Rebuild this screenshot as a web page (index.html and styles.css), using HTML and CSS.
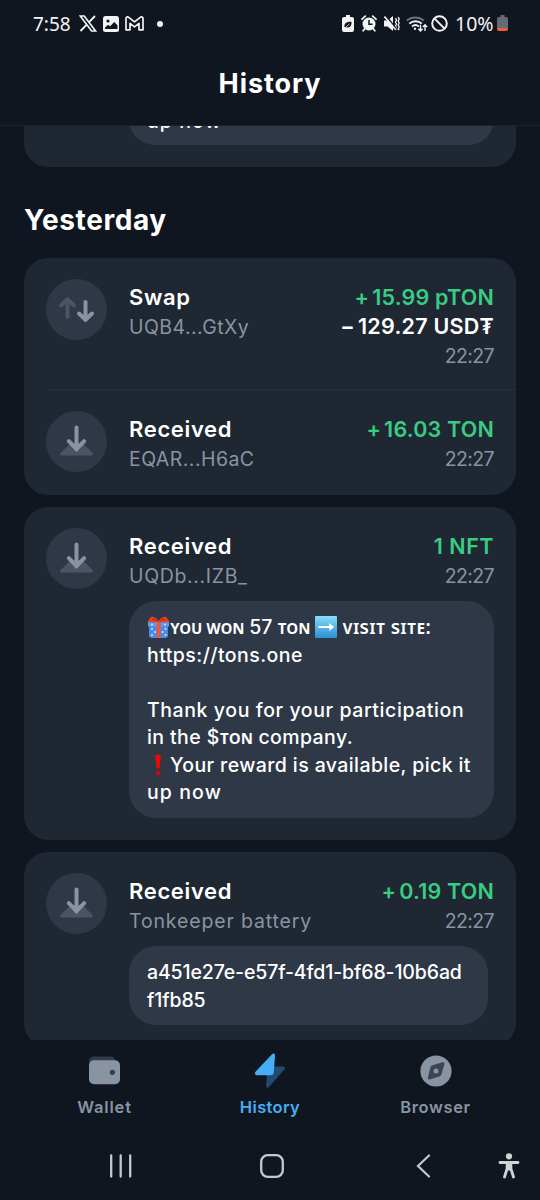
FILE: index.html
```html
<!DOCTYPE html>
<html lang="en">
<head>
<meta charset="utf-8">
<title>History</title>
<link rel="stylesheet" href="styles.css">
</head>
<body>
<svg class="defs" width="0" height="0" aria-hidden="true">
  <symbol id="receive" viewBox="0 0 61 61">
    <path d="M15.500 44.500h30c1.600 0 2-1.300 1-2.400l-10-10H25l-10.500 10c-1 1.100-.6 2.400 1 2.400z" fill="#4a5463"/>
    <path d="M30.500 16.500v22M22.800 30.200l7.700 7.800 7.700-7.800" fill="none" stroke="#8994a3" stroke-width="4" stroke-linecap="round" stroke-linejoin="round"/>
  </symbol>
</svg>
<div class="phone">
  <header class="top">
    <div class="status">
      <div class="status-left">
        <span class="clock">7:58</span>
        <svg class="s-x" width="18" height="17" viewBox="0 0 18 17"><path d="M1.200 1h4l11.400 15h-4z" fill="none" stroke="#f1f3f5" stroke-width="1.700"/><path d="M16 1l-6.400 6.600M7.700 9.600L1.500 16" stroke="#f1f3f5" stroke-width="1.900"/></svg>
        <svg class="s-img" width="16" height="16" viewBox="0 0 16 16"><rect width="16" height="16" rx="2.500" fill="#f1f3f5"/><circle cx="5" cy="5" r="1.600" fill="#10161f"/><path d="M2 11.500l3-2.800 2.200 1.500 4-4.200 3.300 3.200v3.800H2z" fill="#10161f"/></svg>
        <svg class="s-gm" width="19" height="15" viewBox="0 0 19 15"><path d="M1 13.800V2.500C1 .8 2.600.4 3.700 1.300l5.800 4.500 5.800-4.500c1.100-.9 2.700-.5 2.700 1.200v11.300h-4V7.300l-4.500 3.500L5 7.300v6.500z" fill="none" stroke="#f1f3f5" stroke-width="1.700" stroke-linejoin="round"/></svg>
        <i class="dot"></i>
      </div>
      <div class="status-right">
        <svg width="12" height="17" viewBox="0 0 12 17"><path d="M4 0h4v2h2a2 2 0 0 1 2 2v11a2 2 0 0 1-2 2H2a2 2 0 0 1-2-2V4a2 2 0 0 1 2-2h2z" fill="#f1f3f5"/><path d="M2.500 12c-.4-3.500 1.500-5.200 7-5.200.2 4-1.500 6.500-5 5.500M2.200 13.500l3.500-3.700" fill="#10161f"/><path d="M4 12l3.500-3" stroke="#f1f3f5" stroke-width=".8"/></svg>
        <svg width="16" height="17" viewBox="0 0 16 17"><circle cx="8" cy="9" r="6.500" fill="#f1f3f5"/><path d="M1 4.200L4.300 1.200M15 4.200l-3.300-3M3.500 14l-1.300 1.700M12.500 14l1.300 1.700" stroke="#f1f3f5" stroke-width="1.800" stroke-linecap="round"/><path d="M8 5v4.200h3.500" fill="none" stroke="#10161f" stroke-width="1.500"/></svg>
        <svg width="16" height="17" viewBox="0 0 16 17"><path d="M0 5.500h3.500L9 1v15l-5.500-4.500H0z" fill="#f1f3f5"/><path d="M11.500 3l1 2-1 2 1 2-1 2 1 2-1 2M14.200 2l1 2-1 2 1 2-1 2 1 2-1 2 1 1" fill="none" stroke="#f1f3f5" stroke-width="1.300"/><path d="M1.500 0l11 14" stroke="#10161f" stroke-width="1.500"/><path d="M.5 1.500l11 13" stroke="#f1f3f5" stroke-width="1.600"/></svg>
        <svg width="22" height="17" viewBox="0 0 22 17"><path d="M.8 5.600a13 13 0 0 1 17 0" fill="none" stroke="#6b7078" stroke-width="2"/><path d="M3.300 8.600a9.300 9.300 0 0 1 12.500 0M6 11.500a5.300 5.300 0 0 1 6.800 0" fill="none" stroke="#f1f3f5" stroke-width="1.900"/><circle cx="9" cy="13.700" r="1.200" fill="#f1f3f5"/><path d="M14.500 9.800v6M12.400 13.700l2.100 2.300 2.100-2.300M19 16v-6M16.900 12l2.100-2.300 2.100 2.300" fill="none" stroke="#f1f3f5" stroke-width="1.400"/></svg>
        <svg width="17" height="17" viewBox="0 0 17 17"><g fill="none" stroke="#f1f3f5" stroke-width="2"><circle cx="8.500" cy="8.500" r="7.300"/><path d="M3.400 3.400l10.200 10.200"/></g></svg>
        <span class="percent">10%</span>
        <svg class="s-bat" width="11" height="17" viewBox="0 0 11 17"><path d="M3.500 0h4v2H9a2 2 0 0 1 2 2v9H0V4a2 2 0 0 1 2-2h1.500z" fill="#666b73"/><path d="M0 13h11v1a2 2 0 0 1-2 2H2a2 2 0 0 1-2-2z" fill="#e2603d"/></svg>
      </div>
    </div>
    <h1 class="title">History</h1>
  </header>

  <main class="feed">
    <section class="card peek">
      <div class="message"><p class="l-6">up now</p></div>
    </section>
    <h2 class="day">Yesterday</h2>

    <section class="card">
      <article class="row row-tall">
        <svg class="badge" viewBox="0 0 61 61"><g fill="none" stroke-width="4" stroke-linecap="round" stroke-linejoin="round"><path d="M21.500 38V21M15 26.500l6.500-6.300 6.500 6.300" stroke="#4a5463"/><path d="M39.500 23v18M33 34.500l6.500 6.300 6.500-6.300" stroke="#8994a3"/></g></svg>
        <div class="who"><b class="kind k-swap">Swap</b><span class="addr a-1">UQB4...GtXy</span></div>
        <div class="sum"><b class="plus p-1">+<i></i>15.99 pTON</b><b class="minus">−<i></i>129.27 USD₮</b><span class="time">22:27</span></div>
      </article>
      <article class="row row-next">
        <svg class="badge"><use href="#receive"/></svg>
        <div class="who"><b class="kind">Received</b><span class="addr a-2">EQAR...H6aC</span></div>
        <div class="sum"><b class="plus p-2">+<i></i>16.03 TON</b><span class="time">22:27</span></div>
      </article>
    </section>

    <section class="card">
      <article class="row">
        <svg class="badge"><use href="#receive"/></svg>
        <div class="who"><b class="kind">Received</b><span class="addr a-3">UQDb...IZB_</span></div>
        <div class="sum"><b class="plus p-3">1 NFT</b><span class="time">22:27</span></div>
      </article>
      <div class="message note">
        <p class="l-1"><svg class="emoji gift" width="23" height="22" viewBox="0 0 23 22"><path d="M2 8h19v12.500L19 22H4l-2-1.500z" fill="#4a8be8"/><path d="M1 6h21v4.500H1z" fill="#5d9af0"/><g fill="#cfe6ff"><circle cx="5" cy="8.500" r="1"/><circle cx="18" cy="8.500" r="1"/><circle cx="5" cy="13" r="1"/><circle cx="8" cy="16" r="1"/><circle cx="5" cy="19" r="1"/><circle cx="15.500" cy="16" r="1"/><circle cx="18.500" cy="13" r="1"/><circle cx="18.500" cy="19" r="1"/></g><path d="M9.800 6h3.800v16H9.800z" fill="#f05a32"/><path d="M11.500 5C8 0 4 0 3 2c-.6 1.500-2 2.500-2.500 3.800 3.500.8 7 .9 11 0 4 .9 7.500.8 11 0C22 4.500 20.600 3.500 20 2c-1-2-5-2-8.500 3z" fill="#e8401f"/><path d="M9.500 5.500C8 3 6 2.500 5 4M13.500 5.500C15 3 17 2.500 18 4" fill="none" stroke="#a82112" stroke-width="1"/></svg><span class="sc s-1">ʏᴏᴜ ᴡᴏɴ</span> 57 <span class="sc s-2">ᴛᴏɴ</span> <svg class="emoji arrow" width="22" height="22" viewBox="0 0 22 22"><defs><linearGradient id="sky" x1="0" y1="0" x2="0" y2="1"><stop offset="0" stop-color="#86def9"/><stop offset="1" stop-color="#2b8fd3"/></linearGradient></defs><rect width="22" height="22" rx="1" fill="url(#sky)"/><path d="M3.500 10h10.800V7l4.700 4-4.700 4v-3H3.500z" fill="#fff"/></svg> <span class="sc s-3">ᴠɪsɪᴛ sɪᴛᴇ:</span></p>
        <p class="l-2">https://tons.one</p>
        <p>&nbsp;</p>
        <p class="l-3">Thank you for your participation</p>
        <p class="l-4">in the $<span class="sc s-4">ᴛᴏɴ</span> company.</p>
        <p class="l-5"><svg class="emoji bang" width="23" height="22" viewBox="0 0 23 22"><path d="M8 1.500C8 .3 14 .3 14 1.500l-1.300 13H9.500z" fill="#e00b0b"/><ellipse cx="11.200" cy="18.800" rx="2.300" ry="2.400" fill="#d40a0a"/></svg>Your reward is available, pick it</p>
        <p class="l-6">up now</p>
      </div>
    </section>

    <section class="card">
      <article class="row">
        <svg class="badge"><use href="#receive"/></svg>
        <div class="who"><b class="kind">Received</b><span class="addr a-4">Tonkeeper battery</span></div>
        <div class="sum"><b class="plus p-4">+<i></i>0.19 TON</b><span class="time">22:27</span></div>
      </article>
      <div class="message code"><p class="c-1">a451e27e-e57f-4fd1-bf68-10b6ad</p><p class="c-2">f1fb85</p></div>
    </section>
  </main>

  <nav class="tabs">
    <a class="tab"><svg width="32" height="30" viewBox="0 0 32 30"><path d="M0 8V5.500A5 5 0 0 1 5 .500h16.500a4.500 4.500 0 0 1 4.500 4z" fill="#343b48"/><rect y="4.300" width="31" height="24" rx="5" fill="#8994a3"/><circle cx="23.400" cy="16.300" r="2.600" fill="#343e4c"/></svg><span class="t-1">Wallet</span></a>
    <a class="tab active"><svg width="32" height="36" viewBox="0 0 32 36"><path d="M13.500 13.500H29c1.800 0 2.500 1.500 1.500 2.800L15 34c-1.400 1.500-3 .8-2.900-1z" fill="#224a6c"/><path d="M18 1.300c1.400-1.500 3.200-.9 3 1.100l-1.200 17c-.1 1.700-1.200 2.800-3 2.800H3c-2 0-2.800-1.900-1.500-3.400z" fill="#45aef5"/></svg><span class="t-2">History</span></a>
    <a class="tab"><svg width="32" height="32" viewBox="0 0 32 32"><circle cx="16" cy="16" r="15.600" fill="#8994a3"/><path d="M12.500 10.200l10-2.900c1.300-.4 2.300.5 1.900 1.900l-2.800 9.700c-.4 1.300-1 2-2.300 2.500l-9.500 3c-1.300.4-2.300-.5-1.900-1.900l2.400-9.700c.3-1.300 1-2.200 2.200-2.600z" fill="#3b4554"/><circle cx="16" cy="16" r="2.500" fill="#8994a3"/></svg><span class="t-3">Browser</span></a>
  </nav>
  <footer class="sys">
    <svg width="24" height="24" viewBox="0 0 24 24"><path d="M2.200 1.500v21M11.700 1.500v21M21.200 1.500v21" stroke="#c6c8cb" stroke-width="2.300" stroke-linecap="round"/></svg>
    <svg width="24" height="24" viewBox="0 0 24 24"><rect x="1.200" y="1.200" width="21.600" height="21.600" rx="6.500" fill="none" stroke="#c6c8cb" stroke-width="2.300"/></svg>
    <svg width="15" height="24" viewBox="0 0 15 24"><path d="M13 1.500L2 12l11 10.500" fill="none" stroke="#c6c8cb" stroke-width="2.200" stroke-linecap="round"/></svg>
    <svg width="22" height="26" viewBox="0 0 22 26"><circle cx="11" cy="3.300" r="3.100" fill="#d2d3d5"/><path d="M2 9.500h18M9.200 10l-.2 6-2.500 8M12.800 10l.2 6 2.500 8" fill="none" stroke="#d2d3d5" stroke-width="2.800" stroke-linecap="round"/><path d="M8 9h6v8.500H8z" fill="#d2d3d5"/></svg>
  </footer>
</div>
</body>
</html>
```
FILE: styles.css
```css
* { box-sizing: border-box; margin: 0; padding: 0; }
body {
  background: #10161f;
  color: #fff;
  font-family: Inter, "Noto Sans", sans-serif;
}
.defs { display: block; height: 0; }
.phone { width: 540px; height: 1200px; display: flex; flex-direction: column; overflow: hidden; }
svg { flex: none; display: block; }

/* header */
.top { height: 126px; border-bottom: 1px solid #1a222d; flex: none; }
.status { height: 47px; display: flex; justify-content: space-between; padding: 0 32.500px 0 33px; color: #f1f3f5; }
.status-left, .status-right { display: flex; align-items: center; }
.clock { font-family: "Noto Sans", sans-serif; font-size: 19px; line-height: 46px; width: 45.500px; white-space: nowrap; }
.s-img { margin-left: 6px; }
.s-gm { margin-left: 6px; }
.dot { width: 6px; height: 6px; border-radius: 50%; background: #f1f3f5; margin-left: 13px; }
.status-right { gap: 7px; }
.status-right svg:nth-child(3) { margin-right: -1.500px; }
.status-right svg:nth-child(4) { margin-right: -4px; }
.percent { font-family: "Noto Sans", sans-serif; font-size: 19.500px; }
.s-bat { margin-left: -4px; }
.title { height: 78px; line-height: 74px; text-align: center; font-size: 27px; font-weight: 700; letter-spacing: .900px; }

/* feed */
.feed { height: 914px; overflow: hidden; padding: 0 24px; flex: none; }
.card { background: #1e2732; border-radius: 24px; padding-bottom: 22px; margin-bottom: 12px; }
.card.peek { height: 40.500px; margin: 0; border-radius: 0 0 24px 24px; display: flex; flex-direction: column; justify-content: flex-end; overflow: hidden; }
.peek .message { padding: 14px 18px 9.500px; }
.day { height: 91px; line-height: 107px; font-size: 28px; font-weight: 700; letter-spacing: .600px; }
.row { display: grid; grid-template-columns: 61px 1fr auto; column-gap: 22px; height: 83px; padding: 22px 22px 0; }
.row-tall { height: 132px; }
.row-next { position: relative; }
.row-next::before { content: ""; position: absolute; left: 24px; right: 0; top: -1px; height: 1px; background: #28323e; }
.badge { width: 61px; height: 61px; border-radius: 50%; background: #2e3847; margin-top: -.400px; }
.who, .sum { display: flex; flex-direction: column; padding-top: 3px; white-space: nowrap; }
.sum { align-items: flex-end; }
.kind, .plus, .minus { font-weight: 600; font-size: 21.500px; line-height: 29px; }
.kind { font-size: 22px; letter-spacing: .650px; }
.plus { color: #39cc83; letter-spacing: .200px; }
.minus { letter-spacing: .250px; }
.p-3 { letter-spacing: .500px; }
.plus i, .minus i { display: inline-block; width: 3px; }
.addr, .time { color: #8994a3; font-size: 19.500px; line-height: 30px; }
.addr { letter-spacing: .450px; line-height: 31px; }
.a-3 { letter-spacing: .650px; }
.a-4 { letter-spacing: .850px; }
.time { letter-spacing: -.600px; }

/* messages */
.message { margin: 11.500px 22px 0 105px; padding: 13px 18px 11px; border-radius: 27px; background: #2e3847; font-size: 19.500px; font-weight: 500; line-height: 27.500px; white-space: nowrap; flex: none; }
.message p { height: 27.500px; }
.message.code { margin-right: 28.500px; letter-spacing: -.130px; }
.l-2 { letter-spacing: .450px; }
.l-3 { letter-spacing: .580px; }
.l-4 { letter-spacing: .400px; }
.l-5 { letter-spacing: .400px; }
.l-6 { letter-spacing: 1.100px; }
.emoji { display: inline-block; vertical-align: -4px; }
.sc { font-family: "Noto Sans", sans-serif; font-weight: 600; font-size: 19px; letter-spacing: 0; }
.s-1 { letter-spacing: -.750px; }
.s-2 { letter-spacing: -.600px; }
.s-3 { letter-spacing: .300px; }
.s-4 { letter-spacing: -.400px; }

/* bottom navigation */
.tabs { height: 90px; display: flex; justify-content: center; flex: none; }
.tab { width: 165.500px; display: flex; flex-direction: column; align-items: center; color: #8994a3; font-size: 16.500px; font-weight: 600; line-height: 24px; padding-top: 10.500px; }
.tab svg { height: 40px; margin-bottom: 4.500px; overflow: visible; }
.tab.active { color: #45aef5; }
.t-1 { letter-spacing: .850px; }
.t-2 { letter-spacing: .350px; }
.t-3 { letter-spacing: .600px; }
.sys { height: 70px; display: flex; align-items: center; padding: 1px 20px 0 109px; flex: none; }
.sys svg:nth-child(2) { margin-left: 127px; }
.sys svg:nth-child(3) { margin-left: 132px; }
.sys svg:nth-child(4) { margin-left: 67px; }
```
